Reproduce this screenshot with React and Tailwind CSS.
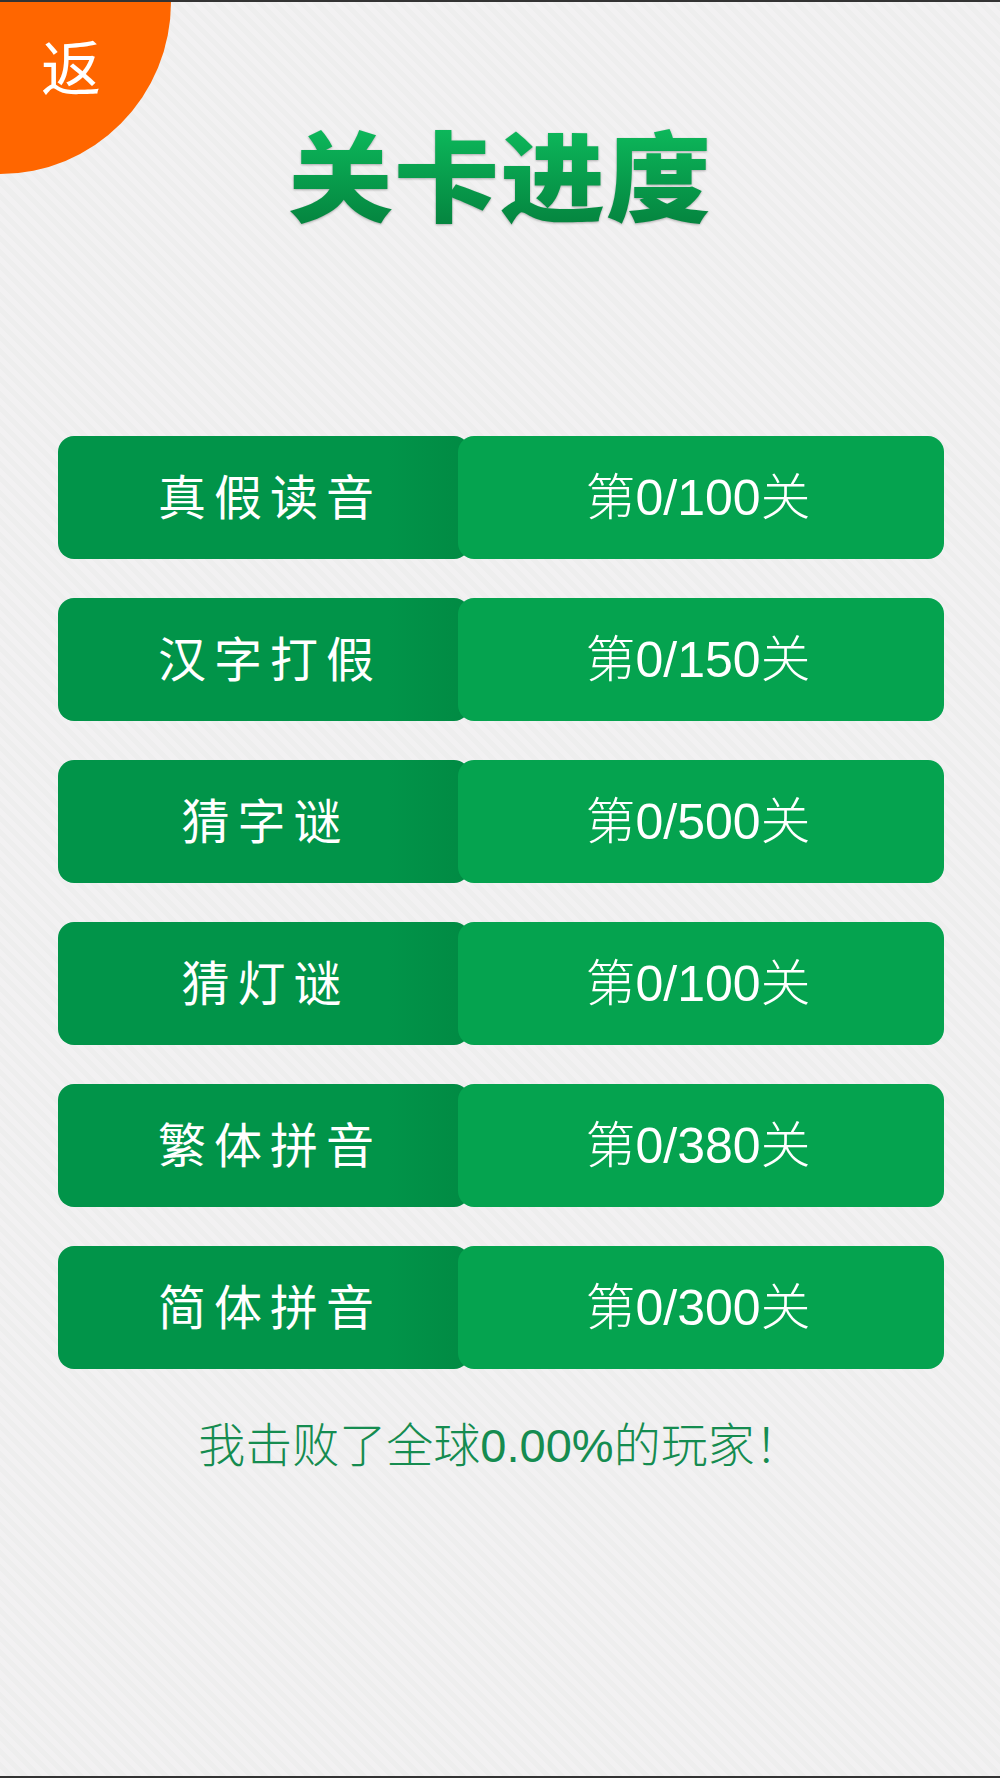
const rows = [
  ["真假读音", "第0/100关", "pl-[12px]"],
  ["汉字打假", "第0/150关", "pl-[12px]"],
  ["猜字谜", "第0/500关", "pl-[3px]"],
  ["猜灯谜", "第0/100关", "pl-[3px]"],
  ["繁体拼音", "第0/380关", "pl-[12px]"],
  ["简体拼音", "第0/300关", "pl-[12px]"],
];

const font = "font-['Liberation_Sans','Noto_Sans_CJK_SC',sans-serif]";

export default function App() {
  return (
    <div className={`relative flex h-[1778px] w-[1000px] flex-col items-center overflow-hidden border-y-2 border-[#333333] bg-[#f0f0f0] bg-[repeating-linear-gradient(45deg,#f2f1f2_0px,#f2f1f2_5px,#eeeeee_5px,#eeeeee_10px)] ${font}`}>
      <div className="absolute left-0 top-0 h-[172px] w-[171px] rounded-br-[100%] bg-[#ff6600] pl-[41px] pt-[34px]">
        <span className="block text-[60px] leading-[70px] text-white">返</span>
      </div>

      <h1 className="mt-[114px] origin-bottom scale-y-[0.93] bg-gradient-to-b from-[#0dba5c] to-[#047f3c] bg-clip-text text-[105px] leading-[120px] font-black tracking-[1px] text-transparent drop-shadow-[0px_1px_1px_rgba(0,0,0,0.3)]">
        关卡进度
      </h1>

      <div className="ml-[2px] mt-[200px] flex w-[886px] flex-col gap-[39px]">
        {rows.map(([label, value, pad], i) => (
          <div key={i} className="flex h-[123px] w-full">
            <div className={`flex w-[412px] items-center justify-center rounded-[16px] bg-gradient-to-r from-[#019449] from-80% to-[#018a43] pt-[2px] text-[48px] tracking-[8px] text-white ${pad}`}>
              {label}
            </div>
            <div className="-ml-[12px] flex flex-1 items-center justify-center rounded-[16px] bg-[#05a34f] pr-[6px] pt-[2px] text-[50px] font-light text-white">
              {value}
            </div>
          </div>
        ))}
      </div>

      <p className="mt-[43px] text-[47px] leading-[68px] font-light text-[#158c50]">
        我击败了全球0.00%的玩家！
      </p>
    </div>
  );
}
